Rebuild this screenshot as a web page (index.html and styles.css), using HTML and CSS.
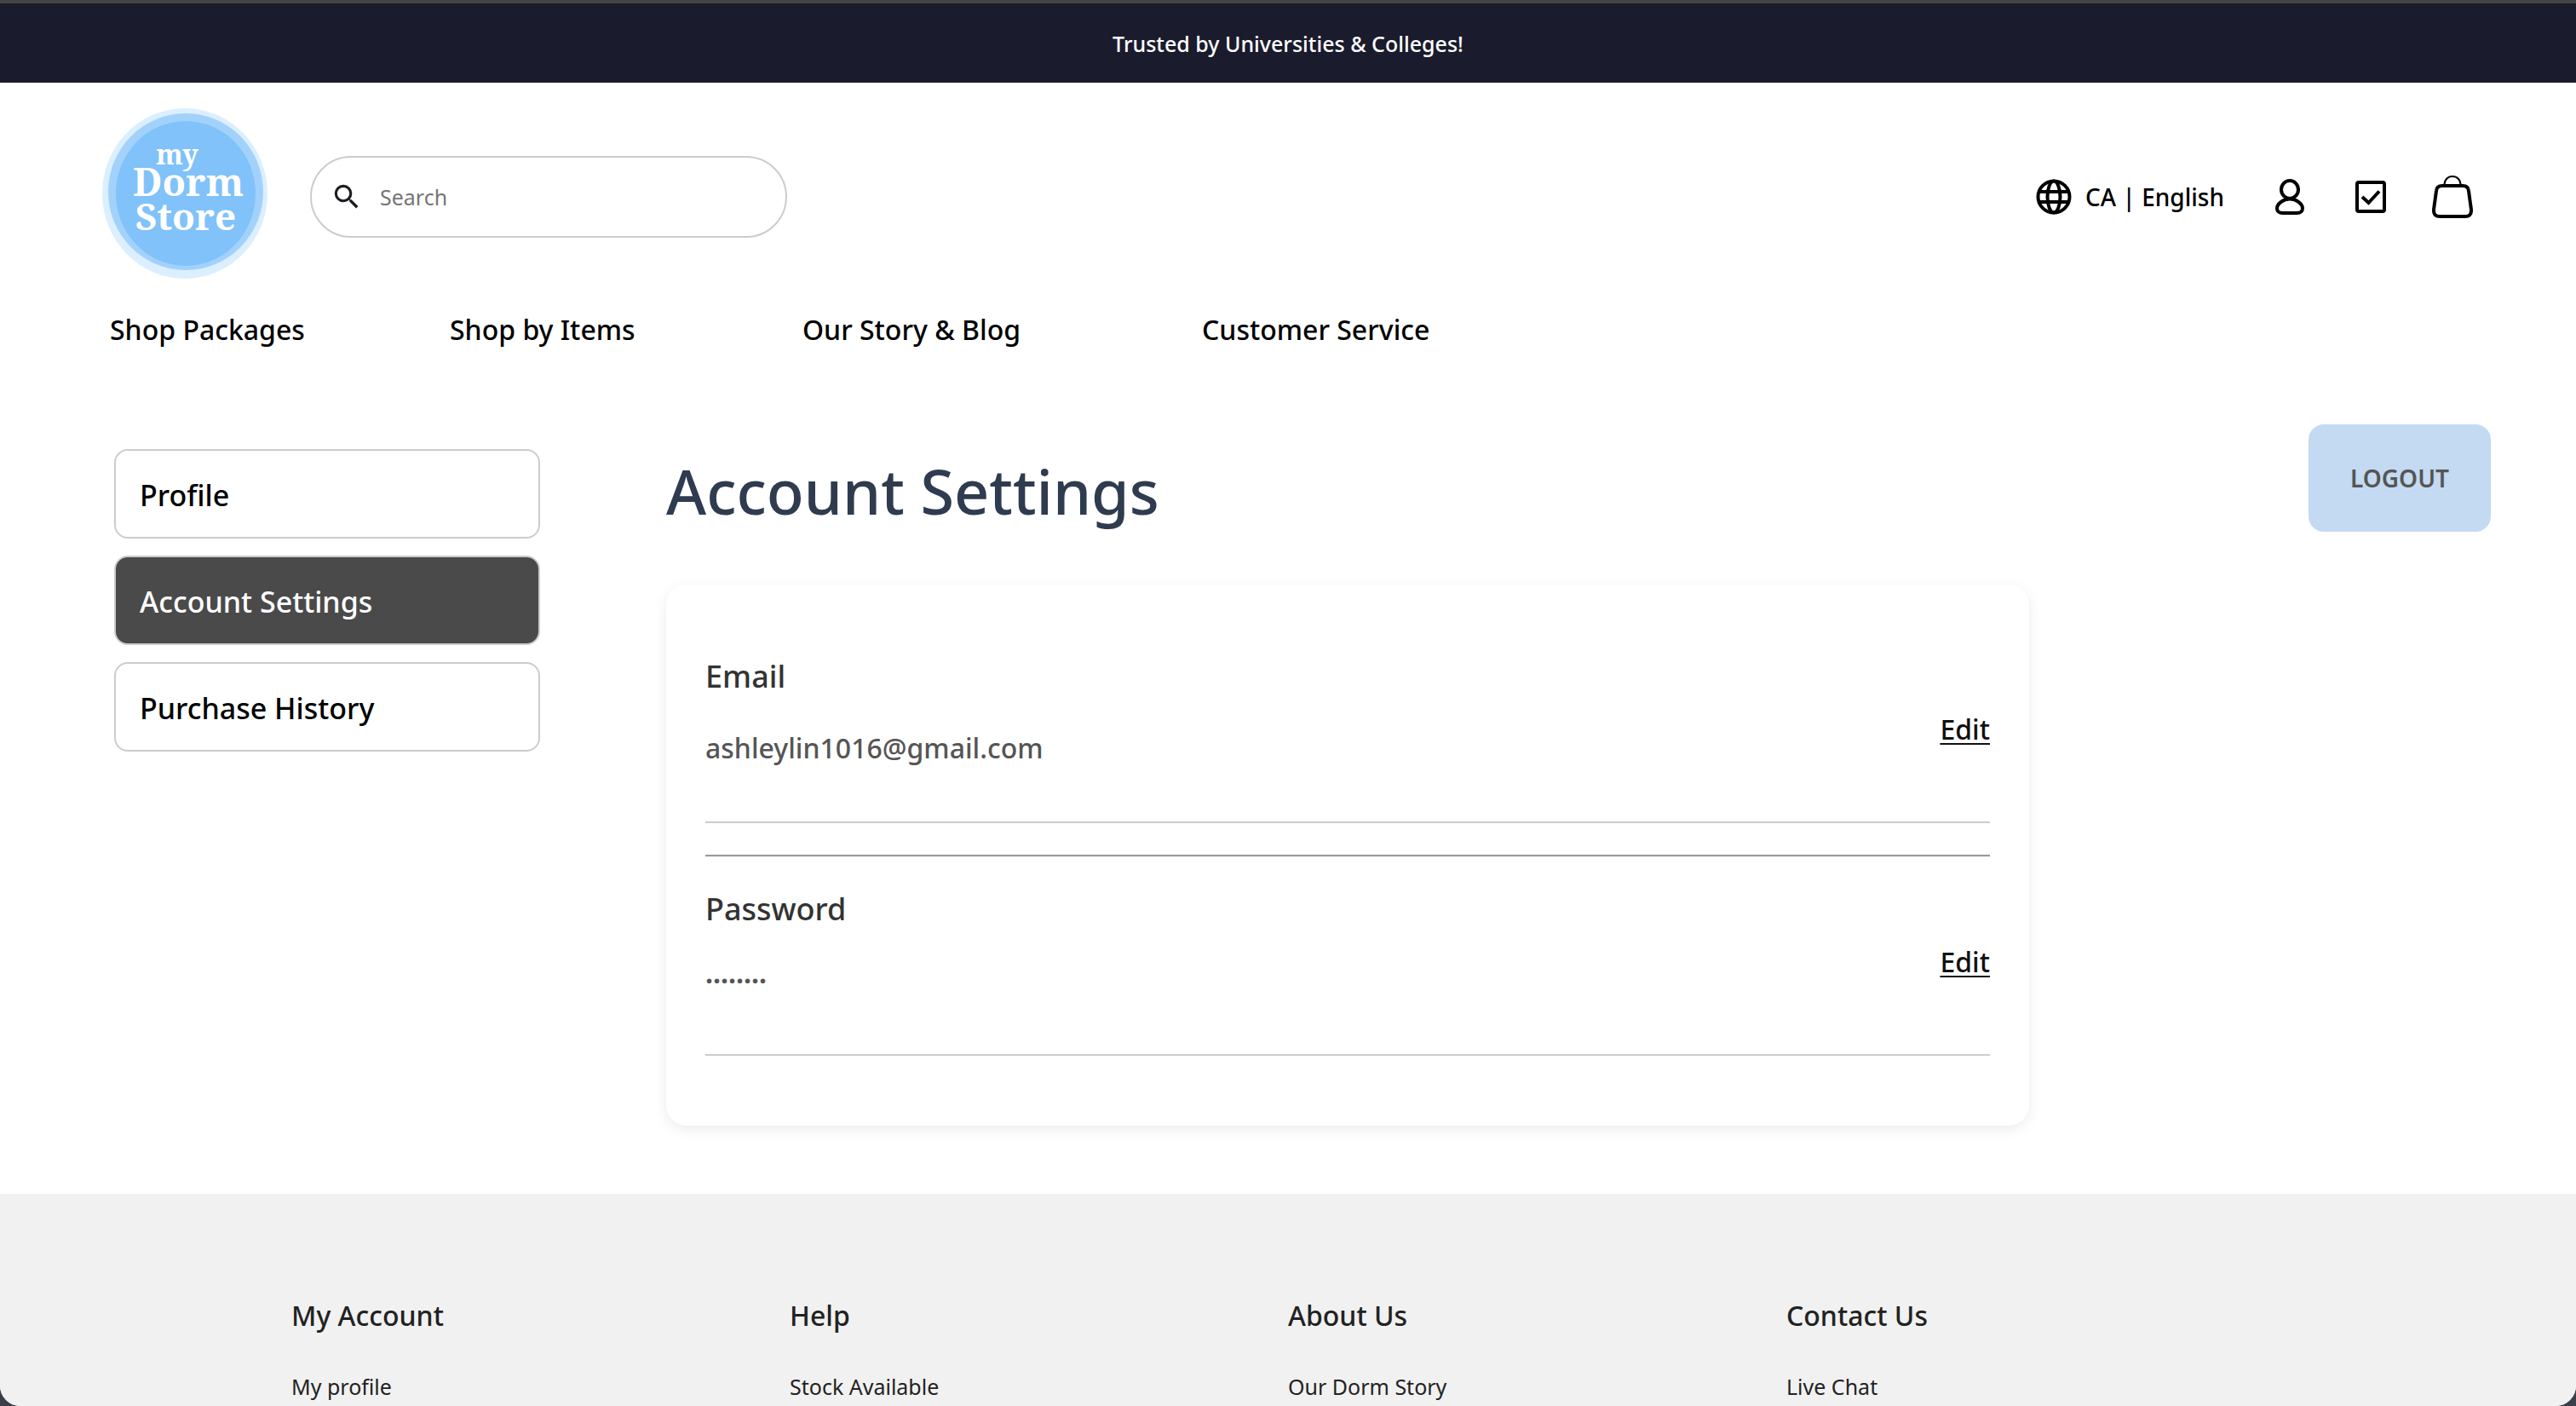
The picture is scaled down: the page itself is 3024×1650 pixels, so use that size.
FILE: index.html
```html
<!DOCTYPE html>
<html lang="en">
<head>
<meta charset="utf-8">
<meta name="viewport" content="width=device-width, initial-scale=1">
<title>Account Settings | My Dorm Store</title>
<link rel="stylesheet" href="styles.css">
</head>
<body>
<div class="page">
  <p class="banner">Trusted by Universities &amp; Colleges!</p>

  <header class="header">
    <div class="header-row">
      <a class="logo" href="#" aria-label="My Dorm Store home">
        <svg width="194" height="208" viewBox="0 0 194 208">
          <ellipse cx="97" cy="100" rx="97" ry="100" fill="#dbeffe"/>
          <ellipse cx="98" cy="98" rx="91" ry="92" fill="#a2d2fc"/>
          <ellipse cx="98" cy="100" rx="82" ry="85" fill="#80c2f9"/>
          <g class="logo-text" text-anchor="middle">
            <text class="logo-small" x="88" y="66">my</text>
            <text class="logo-large" x="101" y="103">Dorm</text>
            <text class="logo-medium" x="98" y="143">Store</text>
          </g>
        </svg>
      </a>
      <label class="search">
        <svg width="38" height="38" viewBox="0 0 24 24" fill="#1c1b1f" aria-hidden="true"><path d="M15.5 14h-.79l-.28-.27A6.47 6.47 0 0 0 16 9.5 6.5 6.5 0 1 0 9.5 16c1.61 0 3.09-.59 4.23-1.57l.27.28v.79l5 4.99L20.49 19l-4.99-5zm-6 0C7.01 14 5 11.99 5 9.5S7.01 5 9.5 5 14 7.01 14 9.5 11.99 14 9.5 14z"/></svg>
        <input class="search-input" type="search" placeholder="Search" aria-label="Search">
      </label>
      <div class="tools">
        <button class="locale" type="button">
          <svg width="42" height="42" viewBox="0 0 42 42" fill="none" stroke="#000" stroke-width="4" aria-hidden="true">
            <circle cx="21" cy="21" r="18.5"/>
            <ellipse cx="21" cy="21" rx="7.5" ry="18.5"/>
            <path d="M4 15h34M4 27h34"/>
          </svg>
          <span>CA | English</span>
        </button>
        <a class="tool" href="#" aria-label="Account">
          <svg width="34" height="42" viewBox="0 0 34 42" fill="none" stroke="#000" stroke-width="4">
            <ellipse cx="17" cy="12.500" rx="10" ry="10.500"/>
            <path d="M17 23.500C9 23.500 2 29.500 2 34.500c0 3.500 2.500 5.500 6.500 5.500h17c4 0 6.500-2 6.500-5.500 0-5-7-11-15-11z"/>
          </svg>
        </a>
        <a class="tool" href="#" aria-label="Checklist">
          <svg width="36" height="38" viewBox="0 0 36 38" fill="none" stroke="#000" stroke-width="4">
            <rect x="2" y="2" width="32" height="34" rx="2"/>
            <path d="M8 19l7.500 7L28 12.500"/>
          </svg>
        </a>
        <a class="tool tool-bag" href="#" aria-label="Shopping bag">
          <svg width="48" height="50" viewBox="0 0 48 50" fill="none" stroke="#000">
            <path stroke-width="2" d="M14.500 11c0-6 4-10 9.500-10s9.500 4 9.500 10"/>
            <path stroke-width="4" d="M12 12h24q6.500 0 7 6l3 22q.500 8-7 8H9q-7.500 0-7-8l3-22q.500-6 7-6z"/>
          </svg>
        </a>
      </div>
    </div>
    <nav class="nav" aria-label="Main">
      <a href="#">Shop Packages</a>
      <a href="#">Shop by Items</a>
      <a href="#">Our Story &amp; Blog</a>
      <a href="#">Customer Service</a>
    </nav>
  </header>

  <main class="main">
    <nav class="sidebar" aria-label="Account">
      <a class="side-link" href="#">Profile</a>
      <a class="side-link side-link-active" href="#" aria-current="page">Account Settings</a>
      <a class="side-link" href="#">Purchase History</a>
    </nav>
    <section class="content">
      <h1 class="title">Account Settings</h1>
      <div class="card">
        <div class="field">
          <div class="field-body">
            <h2 class="field-label">Email</h2>
            <p class="field-value">ashleylin1016@gmail.com</p>
          </div>
          <a class="edit" href="#" aria-label="Edit email">Edit</a>
        </div>
        <hr class="divider">
        <div class="field">
          <div class="field-body">
            <h2 class="field-label">Password</h2>
            <p class="field-value field-value-masked">········</p>
          </div>
          <a class="edit" href="#" aria-label="Edit password">Edit</a>
        </div>
      </div>
    </section>
    <button class="logout" type="button">LOGOUT</button>
  </main>

  <footer class="footer">
    <div class="footer-columns">
      <section><h3 class="footer-title">My Account</h3><a class="footer-link" href="#">My profile</a></section>
      <section><h3 class="footer-title">Help</h3><a class="footer-link" href="#">Stock Available</a></section>
      <section><h3 class="footer-title">About Us</h3><a class="footer-link" href="#">Our Dorm Story</a></section>
      <section><h3 class="footer-title">Contact Us</h3><a class="footer-link" href="#">Live Chat</a></section>
    </div>
  </footer>
</div>
</body>
</html>
```
FILE: styles.css
```css
* { box-sizing: border-box; }

body {
  margin: 0;
  background: #3c3f4a;
  color: #000;
  font-family: "Noto Sans", "Open Sans", sans-serif;
  font-weight: 500;
}

a { color: inherit; text-decoration: none; }
h1, h2, h3, p { margin: 0; font-weight: 500; }
button, input { font: inherit; color: inherit; }
svg { display: block; flex: none; }

.page {
  display: flex;
  flex-direction: column;
  min-height: 100vh;
  border-top: 4px solid #444;
  border-radius: 0 0 24px 24px;
  background: #fff;
  overflow: hidden;
}

.banner {
  padding: 27px 24px 26px;
  background: #1a1b2d;
  color: #fff;
  font-size: 25px;
  line-height: 40px;
  text-align: center;
}

/* Header */
.header { padding: 30px 121px 0 120px; }
.header-row { display: flex; align-items: center; }
.logo-text { fill: #fff; font-family: "Noto Serif", "Liberation Serif", serif; font-weight: 700; }
.logo-small { font-size: 32px; }
.logo-large { font-size: 45px; }
.logo-medium { font-size: 44px; }

.search {
  display: flex;
  align-items: center;
  gap: 20px;
  flex: 0 1 560px;
  height: 96px;
  margin-left: 50px;
  padding: 0 22px;
  border: 2px solid #ccc;
  border-radius: 48px;
}
.search-input {
  flex: 1;
  min-width: 0;
  padding: 0;
  border: 0;
  outline: 0;
  background: none;
  font-size: 25px;
  font-weight: 400;
}
.search-input::placeholder { color: #757575; opacity: 1; }

.tools { display: flex; align-items: center; gap: 60px; margin-left: auto; }
.locale {
  display: flex;
  align-items: center;
  gap: 16px;
  padding: 0;
  border: 0;
  background: none;
  font-size: 28px;
  line-height: 40px;
}
.tool-bag { margin-left: -6px; }

.nav {
  display: grid;
  grid-template-columns: 399px 414px 469px auto;
  margin-top: 28px;
  padding-left: 9px;
  font-size: 32px;
  line-height: 48px;
}

/* Account area */
.main {
  display: flex;
  align-items: flex-start;
  padding: 87px 100px 80px 134px;
}
.sidebar {
  display: flex;
  flex-direction: column;
  flex: 0 0 500px;
  gap: 20px;
  padding-top: 29px;
}
.side-link {
  padding: 28px 28px 25px;
  border: 2px solid #ccc;
  border-radius: 16px;
  font-size: 34px;
  line-height: 48px;
}
.side-link-active { background: #4a4a4a; color: #fff; }

.content { flex: 0 1 1600px; margin-left: 148px; padding-top: 29px; }
.title { color: #2f3c4f; font-size: 72px; line-height: 98px; }
.card {
  margin-top: 61px;
  padding: 84px 46px 82px;
  border-radius: 24px;
  box-shadow: 0 4px 16px rgba(0, 0, 0, 0.08);
}
.field {
  display: flex;
  align-items: center;
  justify-content: space-between;
  padding-bottom: 22px;
  border-bottom: 2px solid #ccc;
}
.field-body { padding-bottom: 40px; }
.field-label { color: #333; font-size: 36px; line-height: 48px; }
.field-value { margin-top: 36px; color: #555; font-size: 32px; line-height: 48px; }
.field-value-masked { font-weight: 700; }
.edit {
  color: #111;
  font-size: 32px;
  line-height: 48px;
  text-decoration: underline;
  text-decoration-thickness: 2px;
  text-underline-offset: 4px;
}
.divider {
  height: 3px;
  margin: 37px 0;
  border: 0;
  border-top: 2px solid #999;
  background: #eee;
}

.logout {
  margin-left: auto;
  padding: 39px 49px;
  border: 0;
  border-radius: 18px;
  background: #c3daf2;
  color: #555;
  font-size: 28px;
  font-weight: 600;
  line-height: 48px;
}

/* Footer */
.footer { flex: 1; padding: 119px 24px 3px; background: #f1f1f1; }
.footer-columns {
  display: grid;
  grid-template-columns: repeat(4, 1fr);
  max-width: 2340px;
  margin: 0 auto;
  color: #222;
}
.footer-title { margin-bottom: 39px; font-size: 32px; line-height: 48px; }
.footer-link { display: block; font-size: 25px; font-weight: 400; line-height: 40px; }
```
